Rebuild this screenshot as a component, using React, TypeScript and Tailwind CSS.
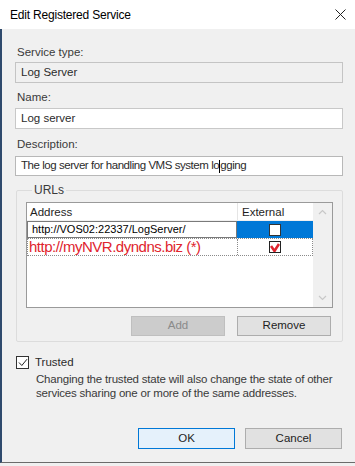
import React from 'react';

const font = { fontFamily: '"Liberation Sans", Arial, sans-serif' };

const Chevron: React.FC<{ up?: boolean }> = ({ up }) => (
  <svg width="9" height="6" viewBox="0 0 9 6" className="text-[#c8c8c8]">
    <path d={up ? 'M1 5 L4.5 1.5 L8 5' : 'M1 1 L4.5 4.5 L8 1'} fill="none" stroke="currentColor" strokeWidth="1.2" />
  </svg>
);

const App: React.FC = () => {
  return (
    <div className="w-[355px] h-[466px] bg-[#f0f0f0] text-[11.5px] text-[#2b2b2b] overflow-hidden" style={font}>
      {/* Title bar */}
      <div className="h-[29px] bg-white flex items-center justify-between pl-[10px] pr-[9px]">
        <span className="text-[12px] tracking-[-0.2px] text-black">Edit Registered Service</span>
        <svg width="11" height="11" viewBox="0 0 11 11">
          <path d="M0.5 0.5 L10.5 10.5 M10.5 0.5 L0.5 10.5" stroke="#222" strokeWidth="1" />
        </svg>
      </div>

      <div className="h-[434px] border-l-2 border-[#2f4a6d] border-b border-b-[#6b6b6b] pl-[13px] pr-[12px] flex flex-col">
        <div className="mt-[15px] h-[16px] leading-[16px] pl-[2px] text-[#3a3a3a]">Service type:</div>
        <div className="mt-[2px] h-[21px] border border-[#c4c4c4] bg-[#f0f0f0] flex items-center px-[5px]">Log Server</div>

        <div className="mt-[6px] h-[16px] leading-[16px] pl-[2px] text-[#3a3a3a]">Name:</div>
        <div className="mt-[3px] h-[21px] border border-[#c8c8c8] bg-white flex items-center px-[5px]">Log server</div>

        <div className="mt-[7px] h-[16px] leading-[16px] pl-[2px] text-[#3a3a3a]">Description:</div>
        <div className="mt-[4px] h-[20px] border border-[#b8b8b8] bg-white flex items-center px-[5px] whitespace-nowrap tracking-[-0.45px]">
          The log server for handling VMS system lo<span className="inline-block w-px h-[13px] bg-black align-middle" />gging
        </div>

        {/* URLs group */}
        <fieldset className="mt-[6px] ml-px border border-[#dcdcdc] rounded-[2px] px-[9px] pb-[5px]">
          <legend className="ml-[6px] px-[2px] h-[16px] leading-[16px] text-[12px] text-[#3a3a3a]">URLs</legend>
          <div className="mt-[4px] h-[106px] border border-[#9a9a9a] bg-white flex">
            <div className="flex-1 flex flex-col">
              <div className="h-[18px] flex border-b border-[#f0f0f0]">
                <div className="w-[210px] pl-[3px] leading-[18px] text-[#1e1e1e]">Address</div>
                <div className="flex-1 border-l border-[#e5e5e5] pl-[4px] leading-[18px] text-[#1e1e1e]">External</div>
              </div>
              <div className="h-[17px] flex">
                <div className="w-[210px] border border-[#7a7a7a] flex items-center pl-[4px] text-[11px] text-black whitespace-nowrap">
                  http://VOS02:22337/LogServer/
                </div>
                <div className="flex-1 bg-[#0078d7] flex items-center justify-center">
                  <div className="w-[12px] h-[12px] bg-white border border-[#333]" />
                </div>
              </div>
              <div className="h-[18px] flex border border-dotted border-[#8a8a8a]">
                <div className="w-[209px] flex items-center pl-[1px] text-[15px] leading-[16px] tracking-[-0.5px] text-[#e0242e] whitespace-nowrap">
                  http://myNVR.dyndns.biz (*)
                </div>
                <div className="flex-1 border-l border-dotted border-[#8a8a8a] flex items-center justify-center">
                  <div className="w-[12px] h-[12px] bg-white border border-[#222] flex items-center justify-center">
                    <svg width="10" height="9" viewBox="0 0 10 9">
                      <path d="M1 3 L4.5 8 L9 1" fill="none" stroke="#e0242e" strokeWidth="2.6" />
                    </svg>
                  </div>
                </div>
              </div>
            </div>
            <div className="w-[19px] bg-[#f0f0f0] flex flex-col items-center justify-between py-[6px]">
              <Chevron up />
              <Chevron />
            </div>
          </div>
          <div className="mt-[8px] flex justify-end gap-[12px] pr-[2px]">
            <button className="w-[94px] h-[20px] bg-[#cccccc] border border-[#bfbfbf] text-[#8a8a8a]">Add</button>
            <button className="w-[94px] h-[20px] bg-[#e1e1e1] border border-[#adadad] text-[#1e1e1e]">Remove</button>
          </div>
        </fieldset>

        {/* Trusted */}
        <div className="mt-[12px] flex items-center gap-[6px] pl-px">
          <div className="w-[13px] h-[13px] bg-white border border-[#333] flex items-center justify-center">
            <svg width="10" height="9" viewBox="0 0 10 9">
              <path d="M1 4.5 L3.8 7.5 L9 1.2" fill="none" stroke="#222" strokeWidth="1" />
            </svg>
          </div>
          <span className="text-[#2b2b2b]">Trusted</span>
        </div>
        <div className="mt-[1px] pl-[21px] leading-[14px] text-[#3a3a3a] whitespace-nowrap tracking-[-0.2px]">
          Changing the trusted state will also change the state of other<br />
          services sharing one or more of the same addresses.
        </div>

        <div className="mt-auto mb-[13px] flex justify-end gap-[10px] pr-px">
          <button className="w-[97px] h-[21px] bg-[#e5f1fb] border border-[#0078d7] text-[#1e1e1e]">OK</button>
          <button className="w-[97px] h-[21px] bg-[#e1e1e1] border border-[#adadad] text-[#1e1e1e]">Cancel</button>
        </div>
      </div>
    </div>
  );
};

export default App;
